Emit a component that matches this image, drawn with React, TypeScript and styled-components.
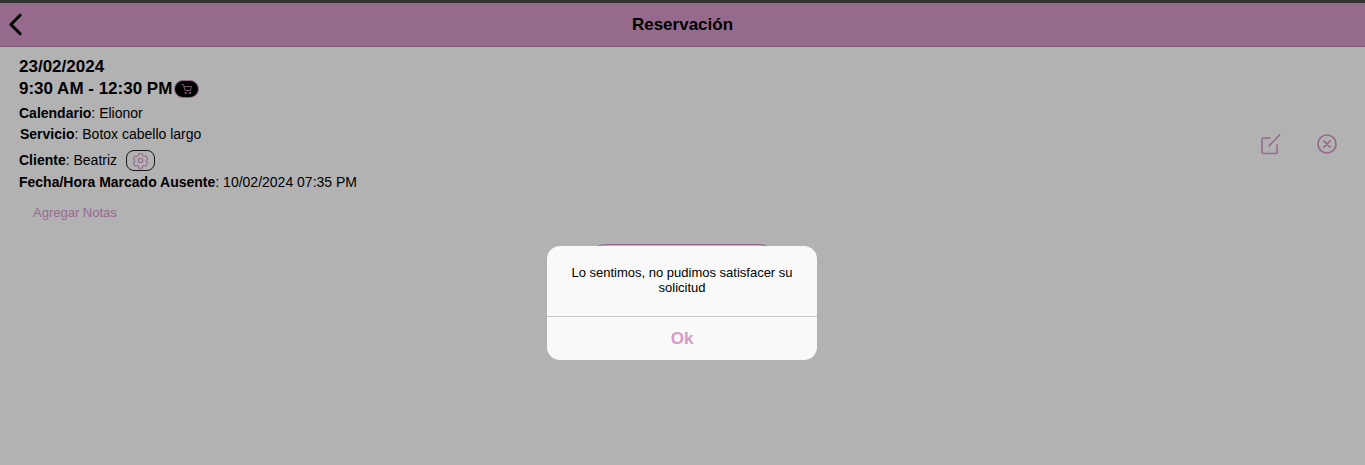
import styled, {createGlobalStyle} from 'styled-components';
import {ChevronLeft} from 'lucide-react';

const purple = '#d699c9';

const Global = createGlobalStyle`
  html, body {
    margin: 0;
    padding: 0;
    height: 100%;
    background: #ffffff;
    font-family: "Liberation Sans", Arial, sans-serif;
    color: #000;
    overflow: hidden;
  }
`;

const Page = styled.div`
  position: relative;
  width: 1365px;
  height: 465px;
  overflow: hidden;
  border-top: 3px solid #333;
  box-sizing: border-box;
`;

const Header = styled.header`
  height: 44px;
  background: ${purple};
  border-bottom: 1px solid #bb80ae;
  box-sizing: border-box;
  display: flex;
  align-items: center;
  justify-content: center;
  position: relative;
`;

const Back = styled.button`
  position: absolute;
  left: 0;
  top: 0;
  width: 30px;
  height: 43px;
  padding: 0;
  border: 0;
  background: none;
  display: flex;
  align-items: center;
  justify-content: center;
  svg {
    flex: none;
  }
`;

const Title = styled.h1`
  margin: 0;
  font-size: 17px;
  line-height: 43px;
  font-weight: 700;
`;

const Body = styled.main`
  display: flex;
  justify-content: space-between;
  padding: 9px 26px 0 19px;
`;

const Info = styled.section`
  display: flex;
  flex-direction: column;
`;

const Big = styled.div`
  font-size: 17px;
  font-weight: 700;
  line-height: 22px;
  display: flex;
  align-items: center;
  gap: 2px;
`;

const Row = styled.div<{$indent?: number; $top?: number}>`
  font-size: 14px;
  line-height: 21px;
  min-height: 21px;
  display: flex;
  align-items: center;
  white-space: pre;
  padding-left: ${(p) => p.$indent ?? 0}px;
  margin-top: ${(p) => p.$top ?? 0}px;
  b {
    font-weight: 700;
  }
`;

const CartPill = styled.span`
  display: inline-flex;
  align-items: center;
  justify-content: center;
  width: 25px;
  height: 18px;
  border-radius: 9px;
  background: #000;
  border: 1px solid ${purple};
  box-sizing: border-box;
`;

const GearButton = styled.span`
  display: inline-flex;
  align-items: center;
  justify-content: center;
  width: 29px;
  height: 21px;
  margin-left: 9px;
  border-radius: 8px;
  border: 1px solid #222;
  box-sizing: border-box;
`;

const NotesLink = styled.a`
  font-size: 13px;
  line-height: 16px;
  color: ${purple};
  margin: 12px 0 0 14px;
`;

const Actions = styled.div`
  display: flex;
  gap: 33px;
  margin-top: 76px;
  height: 24px;
`;

const CenterButton = styled.div`
  position: absolute;
  left: 586px;
  top: 241px;
  width: 193px;
  height: 40px;
  border-radius: 20px;
  border: 1px solid ${purple};
  box-sizing: border-box;
  background: #fff;
`;

const Backdrop = styled.div`
  position: absolute;
  inset: 0;
  background: rgba(0, 0, 0, 0.3);
`;

const Dialog = styled.div`
  width: 270px;
  margin: 243px 0 0 547px;
  background: #f9f9f9;
  border-radius: 13px;
  overflow: hidden;
  text-align: center;
`;

const Message = styled.div`
  font-size: 13px;
  line-height: 15px;
  padding: 19px 16px 0;
  height: 71px;
  box-sizing: border-box;
  border-bottom: 1px solid #c8c7cc;
`;

const OkButton = styled.div`
  height: 43px;
  font-size: 17px;
  line-height: 43px;
  font-weight: 700;
  color: ${purple};
`;

export default function App() {
  return (
    <>
      <Global />
      <Page>
        <Header>
          <Back>
            <ChevronLeft size={37} color="#000" strokeWidth={2} />
          </Back>
          <Title>Reservación</Title>
        </Header>
        <Body>
          <Info>
            <Big>23/02/2024</Big>
            <Big>
              9:30 AM - 12:30 PM
              <CartPill>
                <svg width="12" height="12" viewBox="0 0 24 24" fill="none" stroke={purple} strokeWidth="1.6" strokeLinecap="round" strokeLinejoin="round">
                  <circle cx="9" cy="20" r="1.4" />
                  <circle cx="18" cy="20" r="1.4" />
                  <path d="M2 3h3l3 12h11l2-8H6" />
                </svg>
              </CartPill>
            </Big>
            <Row $top={3}><b>Calendario</b>: Elionor</Row>
            <Row $indent={1}><b>Servicio</b>: Botox cabello largo</Row>
            <Row $top={5}>
              <b>Cliente</b>: Beatriz
              <GearButton>
                <svg width="17" height="17" viewBox="0 0 24 24" fill="none" stroke={purple} strokeWidth="1.5" strokeLinecap="round" strokeLinejoin="round">
                  <path d="M9.600 2.300h4.800l.7 2.800 1.900 1.100 2.800-.8 2.400 4.100-2 2v2.200l2 2-2.400 4.100-2.800-.8-1.900 1.100-.7 2.800H9.600l-.7-2.800-1.900-1.100-2.800.8-2.400-4.100 2-2v-2.200l-2-2 2.400-4.100 2.800.8 1.900-1.100z" />
                  <circle cx="12" cy="12" r="3.200" />
                </svg>
              </GearButton>
            </Row>
            <Row $top={1}><b>Fecha/Hora Marcado Ausente</b>: 10/02/2024 07:35 PM</Row>
            <NotesLink>Agregar Notas</NotesLink>
          </Info>
          <Actions>
            <svg width="24" height="24" viewBox="0 0 24 24" fill="none" stroke={purple} strokeWidth="1.6" strokeLinecap="round" strokeLinejoin="round">
              <path d="M12 6H5a1 1 0 0 0-1 1v13.500a1 1 0 0 0 1 1h13a1 1 0 0 0 1-1V13" />
              <path d="M11 14 21.500 3" />
            </svg>
            <svg width="24" height="24" viewBox="0 0 24 24" fill="none" stroke={purple} strokeWidth="1.7" strokeLinecap="round">
              <circle cx="12" cy="12" r="9" />
              <path d="M8.800 8.800l6.400 6.400M15.200 8.800l-6.400 6.400" />
            </svg>
          </Actions>
        </Body>
        <CenterButton />
        <Backdrop>
          <Dialog>
            <Message>Lo sentimos, no pudimos satisfacer su solicitud</Message>
            <OkButton>Ok</OkButton>
          </Dialog>
        </Backdrop>
      </Page>
    </>
  );
}
